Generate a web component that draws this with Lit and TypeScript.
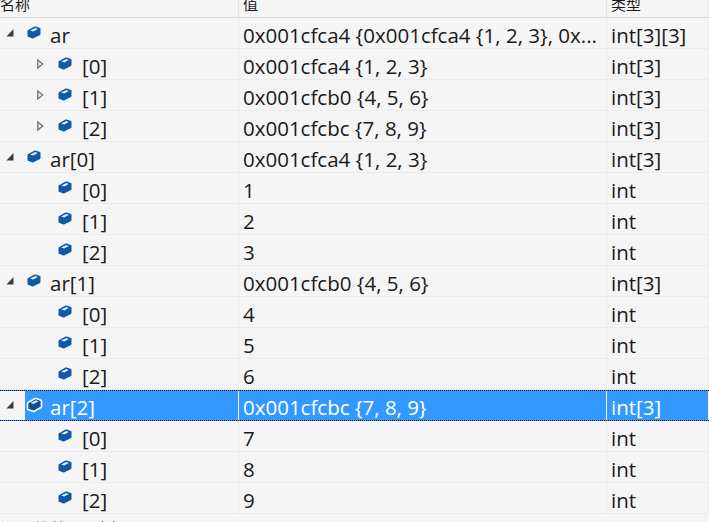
import { LitElement, css, html } from "lit";
import { customElement } from "lit/decorators.js";

type Row = { name: string; value: string; type: string; depth: 0 | 1; arrow?: "open" | "closed"; selected?: boolean };

const cube = html`<svg class="cube" viewBox="0 0 14 13" width="14" height="13">
  <path class="body" d="M0.5 4.5 L7.5 0.5 Q8 0.3 8.6 0.5 L13 2 Q13.5 2.2 13.5 3 L13.5 8 Q13.5 8.6 13 8.9 L6.5 12.3 Q6 12.6 5.4 12.4 L1 10.8 Q0.5 10.6 0.5 10 Z" />
  <path class="top" d="M3.2 4.6 L7.8 2.2 Q8.2 2 8.7 2.2 L10.8 3 L6.2 5.6 Z" />
</svg>`;

const child = (name: string, value: string, type: string, arrow?: "closed"): Row => ({ name, value, type, depth: 1, arrow });

const rows: Row[] = [
  { name: "ar", value: "0x001cfca4 {0x001cfca4 {1, 2, 3}, 0x...", type: "int[3][3]", depth: 0, arrow: "open" },
  child("[0]", "0x001cfca4 {1, 2, 3}", "int[3]", "closed"),
  child("[1]", "0x001cfcb0 {4, 5, 6}", "int[3]", "closed"),
  child("[2]", "0x001cfcbc {7, 8, 9}", "int[3]", "closed"),
  { name: "ar[0]", value: "0x001cfca4 {1, 2, 3}", type: "int[3]", depth: 0, arrow: "open" },
  child("[0]", "1", "int"),
  child("[1]", "2", "int"),
  child("[2]", "3", "int"),
  { name: "ar[1]", value: "0x001cfcb0 {4, 5, 6}", type: "int[3]", depth: 0, arrow: "open" },
  child("[0]", "4", "int"),
  child("[1]", "5", "int"),
  child("[2]", "6", "int"),
  { name: "ar[2]", value: "0x001cfcbc {7, 8, 9}", type: "int[3]", depth: 0, arrow: "open", selected: true },
  child("[0]", "7", "int"),
  child("[1]", "8", "int"),
  child("[2]", "9", "int"),
];

@customElement("app-root")
export class AppRoot extends LitElement {
  static styles = css`
    :host {
      display: block;
      height: 522px;
      overflow: hidden;
      background: #f5f5f5;
      color: #1a1a1a;
      font-family: "Open Sans", "Noto Sans CJK SC", sans-serif;
      font-size: 20.5px;
    }

    .header,
    .row {
      display: grid;
      grid-template-columns: 239px 368px 1fr;
    }

    .header {
      height: 18px;
      border-bottom: 1px solid #dcdcdc;
      box-sizing: border-box;
      font-family: "Noto Sans CJK SC", sans-serif;
      font-size: 15px;
      line-height: 14px;
      overflow: hidden;
    }

    .header div {
      padding-left: 4px;
      border-right: 1px solid #e4e4e4;
    }

    .header span {
      display: block;
      margin-top: -3px;
    }

    .header div:first-child {
      padding-left: 0;
    }

    .row {
      height: 31px;
      box-sizing: border-box;
      border-bottom: 1px solid #ebebeb;
      line-height: 35px;
    }

    .cell {
      padding-left: 4px;
      border-right: 1px solid #ebebeb;
      white-space: nowrap;
      overflow: hidden;
    }

    .name {
      display: flex;
      align-items: center;
      padding-left: 0;
    }

    .arrow {
      width: 8px;
      height: 10px;
      margin-left: 6px;
      margin-top: -1px;
      flex: none;
    }

    .depth-1 .arrow {
      margin-left: 37px;
    }

    .cube {
      flex: none;
      margin-left: 13px;
      margin-top: -1px;
    }

    .label {
      margin-left: 9px;
      margin-top: 5px;
    }

    .depth-1 .label {
      margin-left: 10px;
    }

    .cube .body {
      fill: #0d5aa7;
    }

    .cube .top {
      fill: #e6eef7;
    }

    .selected {
      background: #3399ff;
      color: #ffffff;
      border-top: 1px dotted #111111;
      border-bottom: 1px dotted #111111;
      line-height: 33px;
    }

    .selected .label {
      margin-left: 8px;
      margin-top: 4px;
    }

    .selected .cell {
      border-right-color: #f5f5f5;
    }

    .selected .name {
      background: linear-gradient(to right, #f5f5f5 25px, #3399ff 25px);
    }

    .selected .cube {
      overflow: visible;
      width: 15px;
      height: 14px;
    }

    .selected .cube .body {
      fill: #0b4f96;
      stroke: #ffffff;
      stroke-width: 1.5;
    }

    .selected .cube .top {
      fill: #cfe3f8;
    }

    .footer {
      font-family: "Noto Sans CJK SC", sans-serif;
      font-size: 17px;
      line-height: 17px;
      padding-top: 6px;
      color: #333333;
    }
  `;

  renderArrow(arrow?: "open" | "closed") {
    if (arrow === "open") {
      return html`<svg class="arrow" viewBox="0 0 8 10"><path d="M7.5 1 V8.5 H0.5 Z" fill="#3c3c3c" /></svg>`;
    }
    if (arrow === "closed") {
      return html`<svg class="arrow" viewBox="0 0 8 10">
        <path d="M0.8 1 L5.6 5 L0.8 9 Z" fill="#f5f5f5" stroke="#777777" stroke-width="1.4" />
      </svg>`;
    }
    return html`<span class="arrow"></span>`;
  }

  render() {
    return html`
      <div class="header">
        <div><span>名称</span></div>
        <div><span>值</span></div>
        <div><span>类型</span></div>
      </div>
      ${rows.map(
        (r) => html`
          <div class="row depth-${r.depth} ${r.selected ? "selected" : ""}">
            <div class="cell name">${this.renderArrow(r.arrow)}${cube}<span class="label">${r.name}</span></div>
            <div class="cell">${r.value}</div>
            <div class="cell">${r.type}</div>
          </div>
        `,
      )}
      <div class="footer">调用堆栈 即时窗口</div>
    `;
  }
}
